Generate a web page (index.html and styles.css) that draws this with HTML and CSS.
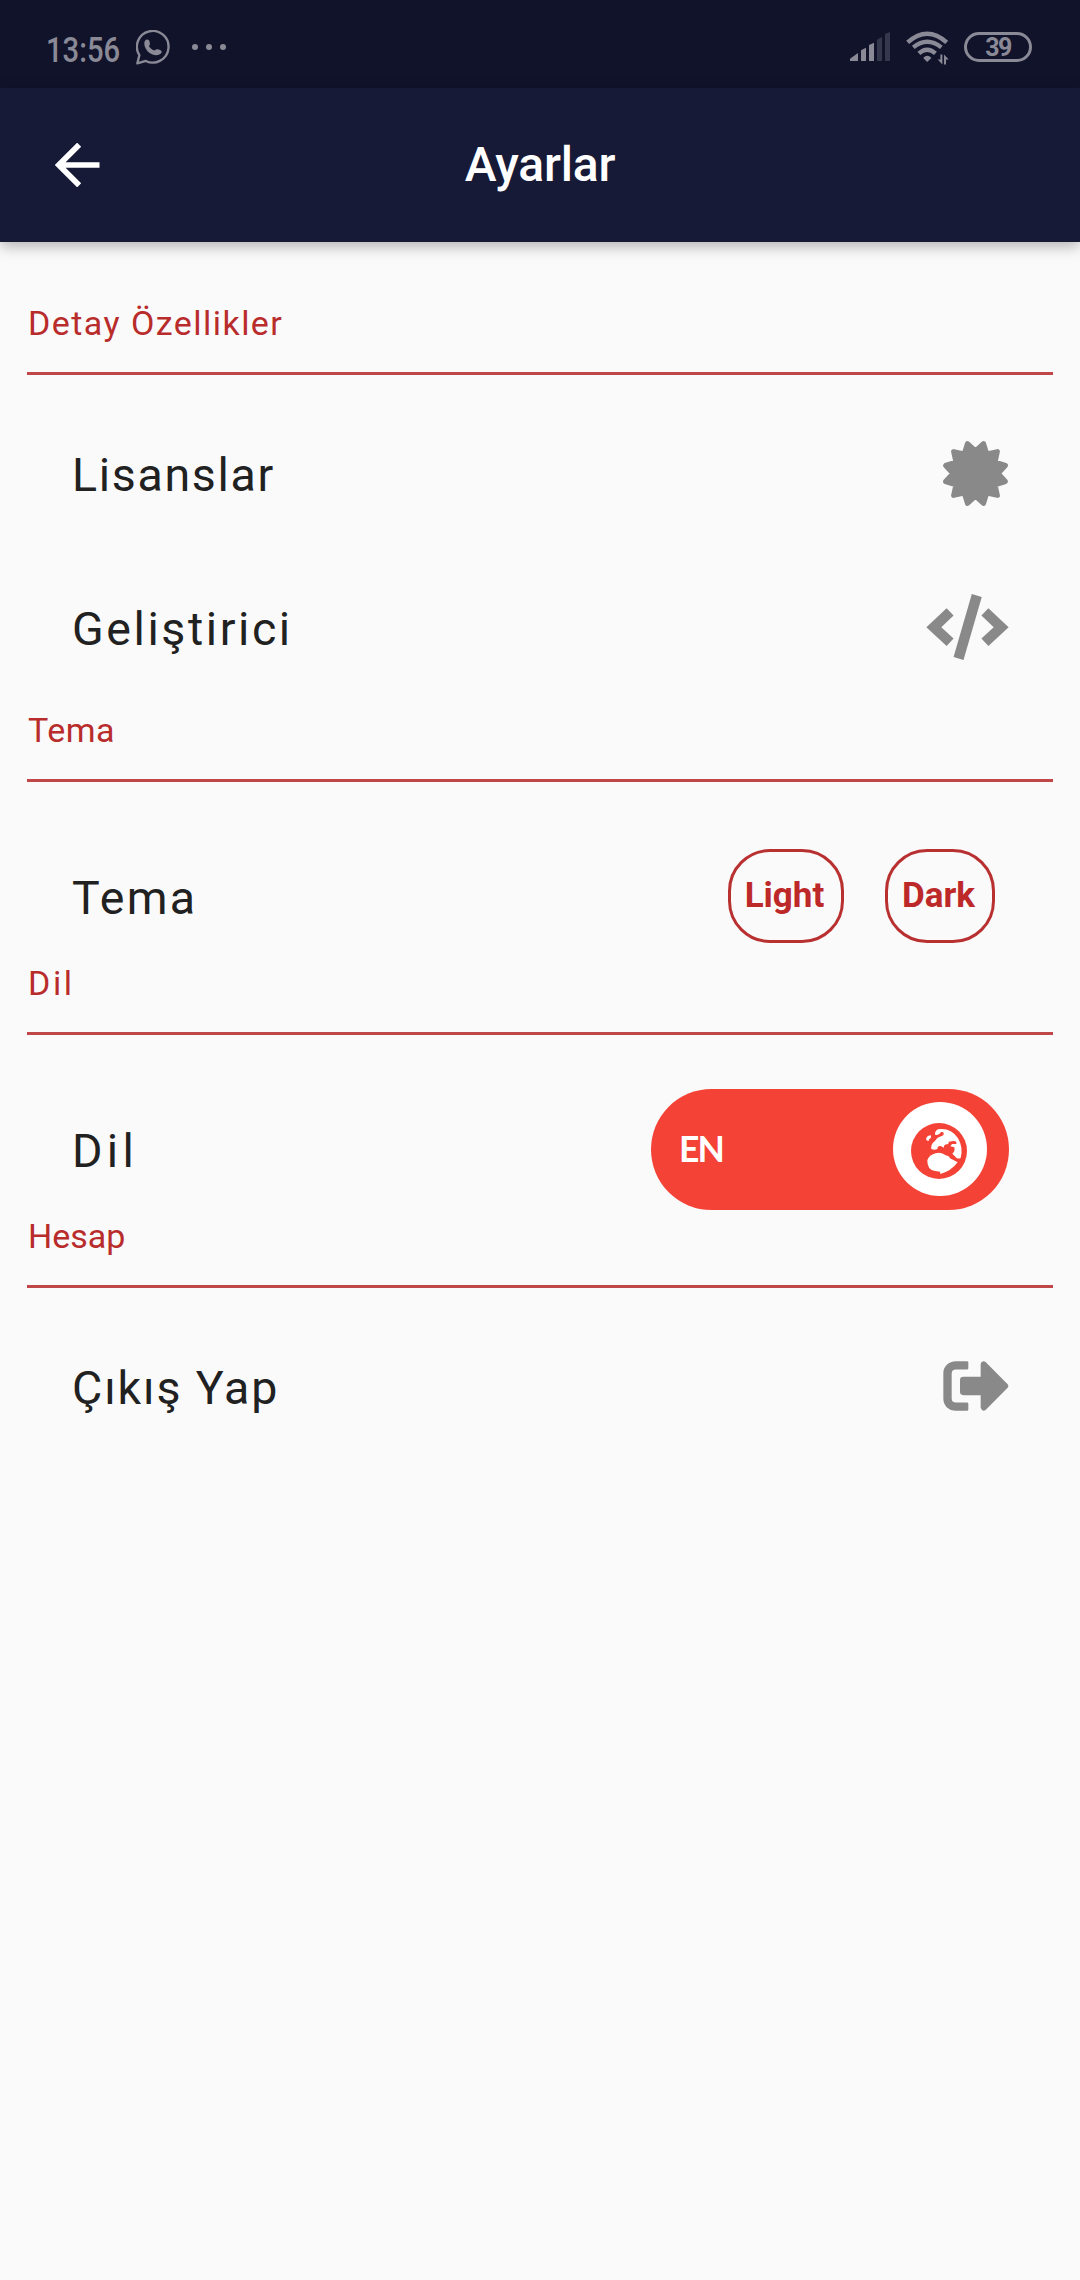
FILE: index.html
```html
<!DOCTYPE html>
<html lang="tr">
<head>
<meta charset="utf-8">
<title>Ayarlar</title>
<link rel="stylesheet" href="styles.css">
</head>
<body>
<div class="status">
  <div class="status-left">
    <span class="clock">13:56</span>
    <svg class="whatsapp" viewBox="408 90 104 104"><path d="M412 189L418 165A47 47 0 1 1 437 182Z" fill="none" stroke="currentColor" stroke-width="7" stroke-linejoin="round"/><path d="M437 119Q447 115 449 127Q451 134 446 137Q450 147 463 151Q469 145 476 148Q488 152 483 159Q473 169 457 163Q438 155 433 135Q431 124 437 119Z" fill="currentColor"/></svg>
    <svg class="dots" viewBox="0 0 102 18" fill="currentColor"><circle cx="9" cy="9" r="9"/><circle cx="51" cy="9" r="9"/><circle cx="93" cy="9" r="9"/></svg>
  </div>
  <div class="status-right">
    <svg class="signal" viewBox="210 96 120 87" fill="currentColor"><path d="M210 183V176L234 159V183ZM243 183V151L258 143V183ZM267 183V135L282 128V183Z"/><path opacity=".3" d="M291 183V119L306 111V183ZM315 183V102L330 96V183Z"/></svg>
    <svg class="wifi" viewBox="377 94 130 102"><g fill="none" stroke="currentColor" stroke-width="13"><path d="M382 128Q441 76 500 128"/><path d="M399 143Q441 109 484 143"/><path d="M416 161Q441 139 466 161"/></g><path d="M429 175Q441 162 454 175L441 187ZM481 165H487V195L473 180H481ZM492 195V165L506 180H498V195Z" fill="currentColor"/></svg>
    <span class="battery">39</span>
  </div>
</div>
<header class="appbar">
  <svg class="back" viewBox="164 429 134 132"><path d="M236 434L175 495L236 556M176 495H297" fill="none" stroke="#fff" stroke-width="17"/></svg>
  <h1 class="title">Ayarlar</h1>
</header>
<main class="settings">
  <section class="section">
    <h2 class="heading heading-details">Detay Özellikler</h2>
    <div class="row">
      <span class="label label-licenses">Lisanslar</span>
      <svg class="badge" viewBox="-33.5 -33.5 67 67"><path d="M22.6 0L29.94 8.02L19.57 11.3L21.92 21.92L11.3 19.57L8.02 29.94L0 22.6L-8.02 29.94L-11.3 19.57L-21.92 21.92L-19.57 11.3L-29.94 8.02L-22.6 0L-29.94-8.02L-19.57-11.3L-21.92-21.92L-11.3-19.57L-8.02-29.94L0-22.6L8.02-29.94L11.3-19.57L21.92-21.92L19.57-11.3L29.94-8.02Z" fill="currentColor" stroke="currentColor" stroke-width="5" stroke-linejoin="round"/></svg>
    </div>
    <div class="row">
      <span class="label label-developer">Geliştirici</span>
      <svg class="code" viewBox="137 582 250 199" fill="currentColor"><path d="M138 682L199 625L220 647L183 682L220 716L199 739ZM275 582L305 591L250 781L220 772ZM325 625L386 682L325 739L304 716L341 682L304 647Z"/></svg>
    </div>
  </section>
  <section class="section section-compact">
    <h2 class="heading heading-theme">Tema</h2>
    <div class="row">
      <span class="label label-theme">Tema</span>
      <div class="themes"><button class="pill pill-light">Light</button><button class="pill pill-dark">Dark</button></div>
    </div>
  </section>
  <section class="section section-compact">
    <h2 class="heading heading-language">Dil</h2>
    <div class="row">
      <span class="label label-language">Dil</span>
      <div class="toggle">
        <span class="lang">EN</span>
        <span class="knob"><svg class="globe" viewBox="843 189 168 168"><circle cx="927" cy="273" r="84" fill="#f44336"/><path fill="#fff" d="M924 208Q963 203 984 235Q1000 262 992 294Q983 299 976 290L967 281Q976 273 973 262L961 259L966 252H979Q981 242 970 243L956 245Q958 252 949 253Q940 256 942 263L932 258Q923 256 922 267Q914 271 904 267Q902 252 914 244L923 233L940 226Q944 214 933 216Q928 226 916 225Q912 216 924 208ZM888 236Q893 226 902 226Q906 234 897 238Q898 246 890 241ZM892 300Q899 284 917 280Q934 275 947 286Q958 288 960 295L983 307Q964 333 931 342L930 335L915 333Q891 330 892 300Z"/></svg></span>
      </div>
    </div>
  </section>
  <section class="section">
    <h2 class="heading heading-account">Hesap</h2>
    <div class="row">
      <span class="label label-logout">Çıkış Yap</span>
      <svg class="logout" viewBox="126 94 198 149" fill="currentColor"><path d="M198 94H165C143 94 127 110 127 130V206C127 228 143 243 165 243H198Q202 243 202 239V222Q202 218 198 218H165Q152 218 152 206V132Q152 119 165 119H198Q202 119 202 115V98Q202 94 198 94ZM187 141H239V103Q241 91 253 96L320 163Q324 169 320 174L253 241Q243 246 239 234V196H187Q177 196 177 186V151Q177 141 187 141Z"/></svg>
    </div>
  </section>
</main>
</body>
</html>
```
FILE: styles.css
```css
* { box-sizing: border-box; }
body { margin: 0; min-height: 2280px; background: #fafafa; font-family: Roboto, sans-serif; }
svg { display: block; flex: none; }
.status { height: 88px; background: #11132b; color: #8a8a97; display: flex; justify-content: space-between; padding: 0 48px 0 46px; }
.status-left, .status-right { display: flex; align-items: flex-start; }
.clock { width: 90px; margin-top: 31px; font-size: 35px; line-height: 40px; font-weight: 500; transform: scaleX(.835); transform-origin: left; }
.whatsapp { width: 35px; height: 35px; margin-top: 30px; }
.dots { width: 34px; height: 6px; margin: 44px 0 0 21px; }
.signal { width: 40px; height: 29px; margin-top: 32px; }
.wifi { width: 43px; height: 34px; margin: 31px 0 0 16px; }
.battery { width: 68px; height: 30px; margin: 32px 0 0 15px; border: 3px solid; border-radius: 15px; font-size: 25px; font-weight: 700; line-height: 26px; letter-spacing: -1.5px; text-align: center; }
.appbar { height: 154px; background: #161a37; display: grid; grid-template-columns: 100px 1fr 100px; align-items: center; padding: 0 55px; box-shadow: 0 4px 14px rgba(0,0,0,.3); }
.back { width: 45px; height: 44px; }
.title { margin: 0; color: #fff; font-size: 48px; font-weight: 500; line-height: 56px; text-align: center; letter-spacing: -.2px; }
.settings { padding: 56px 27px 0; }
.section { display: flex; flex-direction: column; padding-bottom: 1px; }
.heading { margin: 0 0 21px; height: 77px; padding: 4px 0 0 1px; color: #b92c2c; font-size: 34px; font-weight: 400; line-height: 42px; border-bottom: 3px solid #c04747; }
.heading-details { letter-spacing: 1.45px; }
.heading-theme { letter-spacing: .5px; }
.heading-language { letter-spacing: 2.6px; }
.heading-account { letter-spacing: 0; }
.row { height: 154px; display: flex; align-items: center; justify-content: space-between; padding: 0 44px 0 45px; color: #898989; }
.section-compact .heading { margin-bottom: 53px; }
.section-compact .row { height: 122px; }
.label { color: #212121; font-size: 46.5px; line-height: 54px; padding-top: 4px; }
.label-licenses { letter-spacing: 1.7px; }
.label-developer { letter-spacing: 2.6px; }
.label-theme { letter-spacing: 2.3px; }
.label-language { letter-spacing: 4.3px; }
.label-logout { letter-spacing: 1.9px; }
.badge { width: 67px; height: 67px; }
.code { width: 83px; height: 66px; }
.logout { width: 66px; height: 50px; }
.themes { display: flex; gap: 41px; margin-right: 14px; }
.pill { height: 94px; padding: 0 3px 0 0; border: 3px solid #b93030; border-radius: 42px; background: none; color: #bd2929; font: 700 35px/50px Roboto, sans-serif; }
.pill-light { width: 116px; }
.pill-dark { width: 110px; }
.toggle { width: 358px; height: 121px; border-radius: 61px; background: #f44336; display: flex; align-items: center; justify-content: space-between; padding: 0 22px 0 28px; }
.lang { color: #fff; font: 700 35.5px/44px Lato, sans-serif; letter-spacing: -2px; }
.knob { width: 94px; height: 94px; border-radius: 50%; background: #fff; display: grid; place-items: center; padding: 3px 2px 0 0; }
.globe { width: 56px; height: 56px; }
```
